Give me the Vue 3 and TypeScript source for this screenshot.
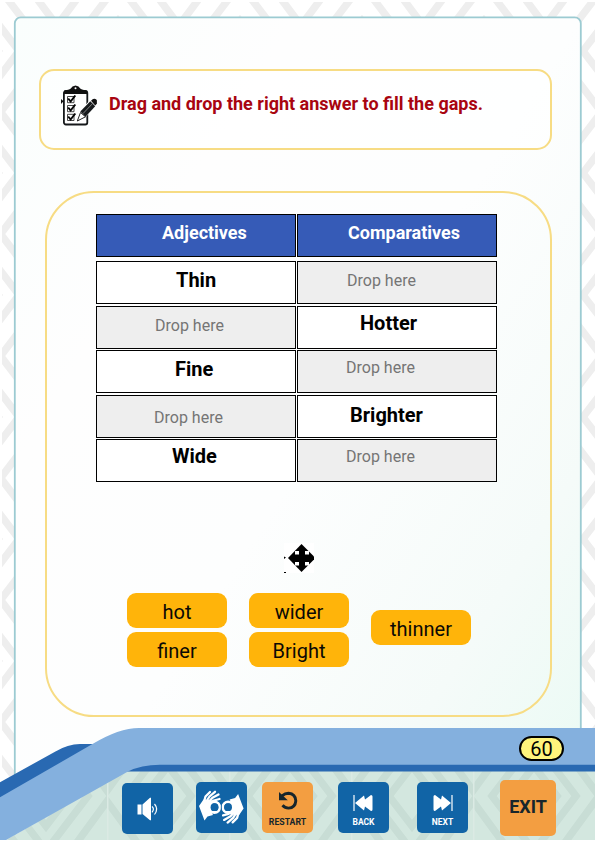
<script setup lang="ts">
interface Cell {
  text: string
  kind: 'head' | 'word' | 'drop'
  left: number
  top: number
}

const rows: { gap: number; cells: Cell[] }[] = [
  {
    gap: 4,
    cells: [
      { text: 'Adjectives', kind: 'head', left: 65, top: 7 },
      { text: 'Comparatives', kind: 'head', left: 50, top: 7 },
    ],
  },
  {
    gap: 2,
    cells: [
      { text: 'Thin', kind: 'word', left: 79, top: 7 },
      { text: 'Drop here', kind: 'drop', left: 49, top: 8 },
    ],
  },
  {
    gap: 1,
    cells: [
      { text: 'Drop here', kind: 'drop', left: 58, top: 8 },
      { text: 'Hotter', kind: 'word', left: 62, top: 5 },
    ],
  },
  {
    gap: 2,
    cells: [
      { text: 'Fine', kind: 'word', left: 78, top: 7 },
      { text: 'Drop here', kind: 'drop', left: 48, top: 6 },
    ],
  },
  {
    gap: 1,
    cells: [
      { text: 'Drop here', kind: 'drop', left: 57, top: 11 },
      { text: 'Brighter', kind: 'word', left: 52, top: 8 },
    ],
  },
  {
    gap: 0,
    cells: [
      { text: 'Wide', kind: 'word', left: 75, top: 5 },
      { text: 'Drop here', kind: 'drop', left: 48, top: 6 },
    ],
  },
]

const answers: string[][] = [['hot', 'finer'], ['wider', 'Bright'], ['thinner']]
</script>

<template>
  <div class="page">
    <svg class="backdrop" width="596" height="842" viewBox="0 0 596 842">
      <defs>
        <pattern id="weave" x="-65" y="-10" width="122" height="122" patternUnits="userSpaceOnUse">
          <g fill="none" stroke="#eeeeee" stroke-width="7.500">
            <path d="M61 56 66 61 61 66 56 61Z" stroke-width="3" />
            <path d="M61 31 84 61 61 91 38 61Z" />
            <path d="M61 -6 112 61 61 128 10 61Z" />
            <path d="M-4 41 34-10M88-10 126 41M-4 81 34 132M88 132 126 81" />
          </g>
        </pattern>
        <pattern id="weave-footer" x="-15" y="735" width="122" height="122" patternUnits="userSpaceOnUse">
          <g fill="none" stroke="#c8ddd5" stroke-width="7.500">
            <path d="M61 31 84 61 61 91 38 61Z" />
            <path d="M61 6 103 61 61 116 19 61Z" />
            <path d="M-4 61 48-10M74-10 126 61M-4 61 48 132M74 132 126 61" />
          </g>
          <path d="M0 0V122" stroke="#dbeae4" stroke-width="3" />
        </pattern>
        <linearGradient id="paper" x1="0" y1="0" x2="1" y2="1">
          <stop offset="0" stop-color="#fafefd" />
          <stop offset=".25" stop-color="#fefefe" />
          <stop offset=".5" stop-color="#fdfefe" />
          <stop offset=".75" stop-color="#f5fbf9" />
          <stop offset="1" stop-color="#e6faf2" />
        </linearGradient>
      </defs>
      <rect x="2" y="2" width="593" height="838" fill="url(#weave)" />
      <rect x="14.8" y="17.3" width="566" height="900" rx="6" fill="url(#paper)" stroke="#9ccbd2" stroke-width="1.8" />
      <path d="M6 840 128 770H595V840Z" fill="#d3e7df" />
      <path d="M6 840 128 770H595V840Z" fill="url(#weave-footer)" />
      <path d="M0 782.3 55 751.7Q68 744 80 744H140L0 810Z" fill="#2969b2" />
      <path d="M125 771.5 150 760H595V771.5Z" fill="#2969b2" />
      <path d="M0 797.3 92 744.3Q119 728 139 728H595V764.8H160Q141 765 128 771.5L6 840H0Z" fill="#84b0de" />
      <path d="M0 840H596V842H0ZM595 0H596V842H595Z" fill="#fff" />
    </svg>

    <header class="prompt">
      <svg class="checklist" width="38" height="42" viewBox="0 0 38 42">
        <rect x="3.9" y="6" width="23.4" height="33.5" rx="2" fill="#fff" stroke="#15181a" stroke-width="1.8" />
        <path d="M4 9V5.8L9 4.5H22L27 5.8V9H4Z" fill="#111" />
        <path d="M7 6.5 11 3.3 12.5 1.4 15.5 .5 18.5 1.4 20 3.3 24 6.5Z" fill="#111" />
        <circle cx="15.500" cy="3.300" r="1" fill="#fff" />
        <path d="M1 14 3.500 16.300 1 19Z" fill="#111" />
        <g fill="none" stroke="#333" stroke-width=".9">
          <path d="M7.500 11.500h6.500v6.200h-6.500zM7.500 20.500h6.500v6.200h-6.500zM7.500 29.300h6.500v6.200h-6.500z" />
        </g>
        <g fill="none" stroke="#050505" stroke-width="2">
          <path d="m8.200 13.500 2.400 3 4.700-6M8.200 22.500l2.400 3 4.700-6M8.200 31.500l2.400 3 4.700-6" />
        </g>
        <path d="m17.300 36 3-9.500L30.500 15l5.800 5.300L25.500 31.800Z" fill="#fff" stroke="#fff" stroke-width="1" />
        <path d="m17.300 36 3.200-8.500 5 4.300Z" fill="#fff" stroke="#222" />
        <path d="m20.300 26.600 10-10.300 4.900 4.900-9.700 10.500Z" fill="#171a1c" />
        <path d="m23 28.600 9-9.500" stroke="#aaa" stroke-width=".7" />
        <path d="m31 15.800 2-1.800q2.800-1.100 3.900 1.200v3.500l-1.700 1.700Z" fill="#111" />
      </svg>
      <h1>Drag and drop the right answer to fill the gaps.</h1>
    </header>

    <main class="exercise">
      <div class="table">
        <div v-for="(row, r) in rows" :key="r" class="row" :style="{ marginBottom: row.gap + 'px' }">
          <div
            v-for="(cell, c) in row.cells"
            :key="c"
            class="cell"
            :class="cell.kind"
            :style="{ paddingLeft: cell.left + 'px', paddingTop: cell.top + 'px' }"
          >
            {{ cell.text }}
          </div>
        </div>
      </div>

      <svg class="move" width="30" height="30" viewBox="0 0 30 30">
        <path d="M0 0h30v30H0z" fill="#fff" />
        <path d="M17.500 1 30 13.500v3L17.500 29 4 15Z" />
        <path d="M11 8h4v3.500h-4zM21 8h4v3.500h-4zM11 19h4v3.500h-4zM21 19h4v3.500h-4z" fill="#fff" />
        <path d="M0 13.500 2 14.500 0 16ZM0 29h2v1H0z" />
      </svg>

      <div class="answers">
        <div v-for="(group, g) in answers" :key="g" class="group">
          <button v-for="word in group" :key="word" type="button" class="chip">{{ word }}</button>
        </div>
      </div>
    </main>

    <div class="band">
      <span class="page-number">60</span>
    </div>

    <nav class="controls">
      <button class="btn audio" type="button">
        <svg width="51" height="51" viewBox="0 0 51 51">
          <path d="M15.500 21.500h4v10h-4zM20.500 21.500 28 14.800h1v22.400h-1l-7.500-6.200Z" fill="#fff" />
          <path d="M30 23.500q2.800 2.500 0 5.800M32.500 21q4.300 5 0 10.500" fill="none" stroke="#fff" stroke-width="1.200" />
        </svg>
      </button>
      <button class="btn sign" type="button">
        <svg width="51" height="51" viewBox="0 0 51 51">
          <g id="hand">
            <path d="M3 24 7.500 17.500 17 18.500 15 29 17 33 11.500 34.500 8.500 38.500Z" fill="#fff" />
            <g fill="none" stroke="#fff" stroke-linecap="round" stroke-linejoin="round">
              <circle cx="18.500" cy="25.200" r="5.300" stroke-width="2.800" />
              <path
                d="M8 20 9.500 14.500 14 10M10 20 13.500 14.500 19 9.800M12.500 20 16.500 15.800 22.500 12.500M15 20.500 18 18.500 23.500 17"
                stroke-width="2.300"
              />
            </g>
            <circle cx="18.500" cy="25.200" r="3.900" fill="#1164a6" />
          </g>
          <use href="#hand" transform="rotate(180 25.300 25.200)" />
          <path d="M25.300 20v10.500" stroke="#1164a6" stroke-width=".9" />
        </svg>
      </button>
      <button class="btn restart" type="button">
        <svg width="24" height="24" viewBox="0 0 24 24">
          <path
            d="M6 6.800Q9 4.300 12.500 4.300q7 .7 7.300 7.500-.5 6.800-7.300 7.300-3.500 0-6-2.800"
            fill="none"
            stroke="#17262c"
            stroke-width="2.900"
          />
          <path d="M3 3v8.300h8.800Z" fill="#17262c" />
        </svg>
        <span>RESTART</span>
      </button>
      <button class="btn back" type="button">
        <svg width="21" height="18" viewBox="0 0 21 18">
          <path d="M1 1v16" stroke="#fff" stroke-width="1.200" />
          <path d="m2 9 9-7.500 1 4 6-4.500q1.500 0 1.500 1.500v13q0 1.500-1.500 1.500l-6-4.500-1 4Z" fill="#fff" />
        </svg>
        <span>BACK</span>
      </button>
      <button class="btn next" type="button">
        <svg width="21" height="18" viewBox="0 0 21 18">
          <path d="M20 1v16" stroke="#fff" stroke-width="1.200" />
          <path d="m19 9-9-7.500-1 4L3 1Q1.500 1 1.500 2.500v13Q1.500 17 3 17l6-4.500 1 4Z" fill="#fff" />
        </svg>
        <span>NEXT</span>
      </button>
      <button class="btn exit" type="button">EXIT</button>
    </nav>
  </div>
</template>

<style>
body {
  margin: 0;
  background: #fff;
  overflow: hidden;
}
</style>

<style scoped>
* {
  box-sizing: border-box;
}

.page {
  position: relative;
  z-index: 0;
  display: flex;
  flex-direction: column;
  width: 596px;
  height: 842px;
  overflow: hidden;
  font-family: Roboto, sans-serif;
  color: #000;
}

.backdrop {
  position: absolute;
  inset: 0;
  z-index: -1;
}

.prompt {
  display: flex;
  width: 513px;
  height: 81px;
  margin: 69px 0 0 39px;
  padding: 14px 0 0 19px;
  border: 2px solid #f7dc84;
  border-radius: 15px;
  background: rgba(255, 255, 255, 0.6);
}

.checklist {
  flex: none;
}

h1 {
  margin: 9px 0 0 11px;
  font-size: 18px;
  line-height: 20px;
  font-weight: 700;
  color: #a80510;
  white-space: nowrap;
}

.exercise {
  display: flex;
  flex-direction: column;
  width: 507px;
  height: 526px;
  margin: 41px 0 0 45px;
  padding: 21px 0 0 49px;
  border: 2px solid #f7dc84;
  border-radius: 49px;
}

.table {
  display: flex;
  flex-direction: column;
  width: 401px;
}

.row {
  display: grid;
  grid-template-columns: 200px 200px;
  column-gap: 1px;
}

.cell {
  height: 43px;
  border: 1px solid #000;
  background: #fff;
  white-space: nowrap;
}

.head {
  background: #365bb7;
  color: #fff;
  font-size: 18px;
  line-height: 22px;
  font-weight: 700;
}

.word {
  font-size: 20px;
  line-height: 23px;
  font-weight: 700;
}

.drop {
  background: #eee;
  color: #757575;
  font-size: 16px;
  line-height: 21px;
}

.move {
  margin: 61px 0 0 188px;
}

.answers {
  display: flex;
  gap: 22px;
  margin: 20px 0 0 31px;
}

.group {
  display: flex;
  flex-direction: column;
  gap: 4px;
}

.group:last-child {
  padding-top: 17px;
}

.chip {
  width: 100px;
  height: 35px;
  padding: 3px 0 0;
  border: 0;
  border-radius: 9px;
  background: #ffb40a;
  font: 20px/24px Roboto, sans-serif;
  color: #0b0905;
}

.band {
  display: flex;
  justify-content: flex-end;
  height: 44px;
  margin-top: 10px;
  padding: 9px 32px 0 0;
}

.page-number {
  width: 45px;
  height: 25px;
  border: 2px solid #000;
  border-radius: 13px;
  background: #fff47c;
  font-size: 20px;
  line-height: 22px;
  text-align: center;
}

.controls {
  display: flex;
  align-items: flex-start;
  padding: 11px 0 0 122px;
}

.btn {
  display: flex;
  flex-direction: column;
  align-items: center;
  width: 51px;
  height: 51px;
  margin: 0;
  padding: 0;
  border: 0;
  border-radius: 5px;
  background: #1164a6;
  color: #fff;
  font: 700 8.500px/10px Roboto, sans-serif;
}

.audio {
  margin-top: 1px;
}

.sign {
  margin-left: 23px;
}

.restart {
  margin-left: 15px;
  padding-top: 7px;
  gap: 4px;
  background: #f39e41;
  color: #17262c;
  font-size: 8.700px;
}

.back {
  margin-left: 25px;
  padding-top: 12px;
  gap: 5px;
}

.next {
  margin-left: 28px;
  padding-top: 12px;
  gap: 5px;
}

.exit {
  width: 56px;
  height: 56px;
  margin: -2px 0 0 32px;
  padding-bottom: 3px;
  justify-content: center;
  background: #f39e41;
  color: #17262c;
  font: 700 18px/20px Roboto, sans-serif;
}
</style>
